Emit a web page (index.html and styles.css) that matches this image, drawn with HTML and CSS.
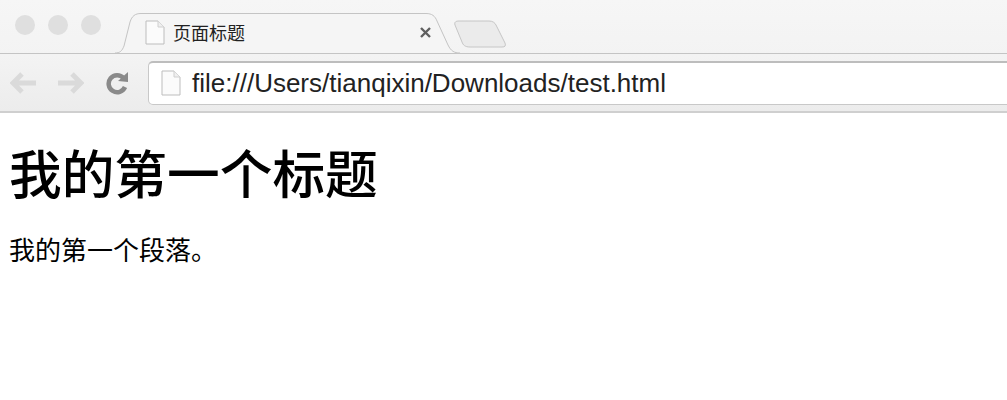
FILE: index.html
```html
<!DOCTYPE html>
<html lang="zh-CN">
<head>
    <meta charset="UTF-8">
    <title>页面标题</title>
    <link rel="stylesheet" href="styles.css">
</head>
<body>

    <header class="browser">
        <div class="tabstrip">
            <div class="lights">
                <span class="light"></span>
                <span class="light"></span>
                <span class="light"></span>
            </div>
            <div class="tab">
                <svg class="tab-shape" width="345" height="41" viewBox="0 0 345 41">
                    <path d="M0 40 C5 40 7 38 9 33 L15 9 C17 3 20 .5 26 .5 L311 .5 C317 .5 320 3 322 8 L333 32 C336 38 339 40 345 40" fill="#f5f5f5" stroke="#c4c4c4"/>
                </svg>
                <svg class="page-icon" width="20" height="25" viewBox="0 0 20 25">
                    <path d="M1 1 H13 L19 7 V24 H1 Z" fill="#fbfbfb" stroke="#bdbdbd"/>
                    <path d="M13 1 V7 H19" fill="#efefef" stroke="#cfcfcf"/>
                </svg>
                <span class="tab-title">页面标题</span>
                <svg class="tab-close" width="13" height="13" viewBox="0 0 13 13">
                    <path d="M2 2 L11 11 M11 2 L2 11" stroke="#5f5f5f" stroke-width="2.4"/>
                </svg>
            </div>
            <svg class="new-tab" width="54" height="29" viewBox="0 0 54 29">
                <path d="M2 5 C1 2 3 1 6 1 L36 1 C40 1 42 3 43 5 L52 23 C53 26 52 27 49 27 L17 27 C12 27 10 25 9 22 Z" fill="#ebebeb" stroke="#c6c6c6"/>
            </svg>
        </div>
        <div class="toolbar">
            <div class="nav">
                <svg width="28" height="24" viewBox="0 0 28 24">
                    <path d="M12 3 L3 12 L12 21 M3 12 H26" fill="none" stroke="#dadada" stroke-width="5"/>
                </svg>
                <svg width="28" height="24" viewBox="0 0 28 24">
                    <path d="M16 3 L25 12 L16 21 M25 12 H2" fill="none" stroke="#dadada" stroke-width="5"/>
                </svg>
                <svg width="24" height="24" viewBox="0 0 24 24">
                    <path d="M18.5 7 A8.5 8.5 0 1 0 20 16" fill="none" stroke="#8a8a8a" stroke-width="4.5"/>
                    <path d="M13 10 L23 1 V11 Z" fill="#8a8a8a"/>
                </svg>
            </div>
            <div class="omnibox">
                <svg class="page-icon" width="20" height="26" viewBox="0 0 20 26">
                    <path d="M1 1 H13 L19 7 V25 H1 Z" fill="#fbfbfb" stroke="#bdbdbd"/>
                    <path d="M13 1 V7 H19" fill="#efefef" stroke="#cfcfcf"/>
                </svg>
                <span class="url">file:///Users/tianqixin/Downloads/test.html</span>
            </div>
        </div>
    </header>

    <main class="content">
        <h1>我的第一个标题</h1>
        <p>我的第一个段落。</p>
    </main>

</body>
</html>
```

FILE: styles.css
```css
* {
    margin: 0;
    padding: 0;
    box-sizing: border-box;
}

body {
    width: 1007px;
    height: 400px;
    overflow: hidden;
    background: #fff;
    color: #000;
    font-family: "Liberation Sans", "Noto Sans CJK SC", sans-serif;
}

svg {
    display: block;
    flex: none;
}

.browser {
    background: linear-gradient(#f6f6f6, #f3f3f3 50%, #ececec);
    border-bottom: 2px solid #cfcfcf;
}

.tabstrip {
    display: flex;
    align-items: flex-end;
    height: 54px;
    padding-left: 15px;
    border-bottom: 1px solid #c4c4c4;
}

.lights {
    display: flex;
    gap: 13px;
    align-self: flex-start;
    padding-top: 15px;
}

.light {
    width: 20px;
    height: 20px;
    border-radius: 50%;
    background: #dfdfdf;
}

.tab {
    position: relative;
    display: flex;
    align-items: center;
    width: 345px;
    height: 41px;
    margin-left: 14px;
    margin-bottom: -1px;
    padding-left: 30px;
    padding-bottom: 3px;
}

.tab-shape {
    position: absolute;
    left: 0;
    top: 0;
}

.tab .page-icon,
.tab-title,
.tab-close {
    position: relative;
}

.tab-title {
    margin-left: 8px;
    font-size: 18px;
    color: #222;
}

.tab-close {
    margin-left: 174px;
}

.new-tab {
    margin-left: -7px;
    margin-bottom: -1px;
    align-self: flex-end;
    transform: translateY(-5px);
}

.toolbar {
    display: flex;
    align-items: center;
    height: 57px;
    padding: 0 0 0 10px;
}

.nav {
    display: flex;
    align-items: center;
    gap: 18px;
    width: 138px;
}

.nav svg:last-child {
    margin-left: 3px;
}

.omnibox {
    display: flex;
    align-items: center;
    flex: 1;
    height: 44px;
    margin-right: -10px;
    padding-left: 12px;
    background: #fff;
    border: 1px solid #c8c8c8;
    border-top: 2px solid #bdbdbd;
    border-radius: 5px;
}

.url {
    margin-left: 11px;
    font-size: 26px;
    color: #222;
}

.content {
    padding: 33px 9px 0;
}

h1 {
    font-size: 52.7px;
    line-height: 60px;
    font-weight: 500;
}

p {
    margin-top: 30px;
    font-size: 26px;
    line-height: 30px;
    font-weight: 400;
}
```
